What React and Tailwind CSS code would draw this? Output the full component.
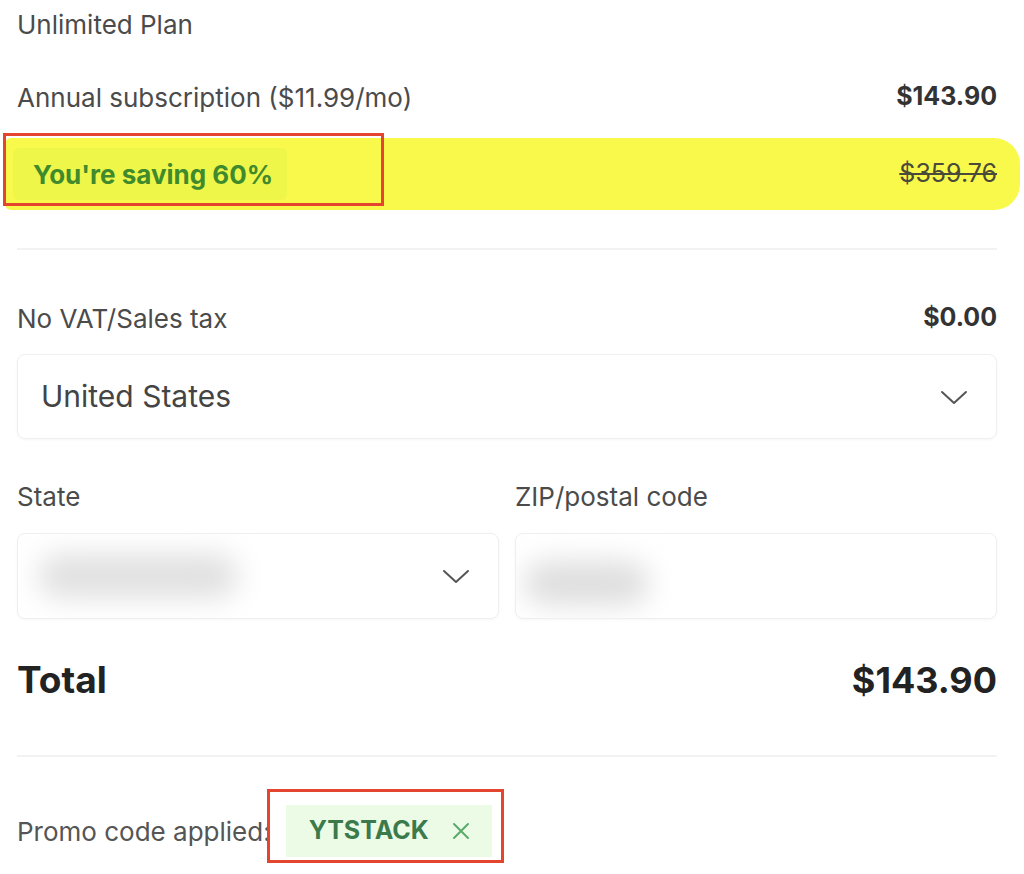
import { useState } from "react";

function Chevron({ className }) {
  return (
    <svg className={className} width="28" height="16" viewBox="0 0 28 16" fill="none">
      <polyline points="2,3 14,14 26,3" stroke="#555" strokeWidth="2" strokeLinecap="round" strokeLinejoin="round" />
    </svg>
  );
}

function Row({ label, value, className }) {
  return (
    <div className={`flex h-[48px] items-center justify-between ${className || ""}`}>
      <span className="text-[26px] text-[#4b4b4b]">{label}</span>
      <span className="text-[25px] font-bold text-[#333]">{value}</span>
    </div>
  );
}

export default function App() {
  const [promo, setPromo] = useState("YTSTACK");

  return (
    <div className="min-h-[874px] bg-white" style={{ fontFamily: "Inter, 'Liberation Sans', sans-serif" }}>
      <div className="pl-[17px] pr-[27px]">
        <div className="flex h-[48px] items-center text-[26px] text-[#4b4b4b]">Unlimited Plan</div>

        <Row className="mt-[25px]" label="Annual subscription ($11.99/mo)" value="$143.90" />

        <div className="relative -ml-[12px] -mr-[23px] mt-[17px] flex h-[72px] items-center justify-between rounded-r-[26px] rounded-l-[6px] bg-[#f9f94c] pr-[23px]">
          <div className="relative ml-[8px] flex h-[52px] items-center rounded-[6px] bg-[#eef64a] pl-[20px] pr-[14px]">
            <span className="text-[26px] font-bold text-[#3f8a2c]">You're saving 60%</span>
            <div className="absolute -left-[10px] -top-[15px] h-[73px] w-[381px] border-[3px] border-[#e4452f]" />
          </div>
          <span className="text-[25px] text-[#4a4a3a] line-through decoration-[2px]">$359.76</span>
        </div>

        <div className="mt-[38px] border-t-2 border-[#f2f2f2]" />

        <Row className="mt-[44px]" label="No VAT/Sales tax" value="$0.00" />

        <button className="mt-[12px] flex h-[85px] w-full items-center justify-between rounded-[8px] border border-[#efefef] pl-[23px] pr-[28px] shadow-[0_1px_3px_rgba(0,0,0,0.04)]">
          <span className="text-[30px] text-[#444]">United States</span>
          <Chevron />
        </button>

        <div className="mt-[34px] grid grid-cols-2 gap-[16px]">
          <div>
            <div className="flex h-[46px] items-center text-[26px] text-[#4b4b4b]">State</div>
            <div className="mt-[14px] flex h-[86px] items-center justify-between overflow-hidden rounded-[8px] border border-[#efefef] pl-[20px] pr-[28px] shadow-[0_1px_3px_rgba(0,0,0,0.04)]">
              <div className="h-[44px] w-[200px] rounded-full bg-[#e0e0e0] blur-[14px]" />
              <Chevron />
            </div>
          </div>
          <div>
            <div className="flex h-[46px] items-center text-[26px] text-[#4b4b4b]">ZIP/postal code</div>
            <div className="mt-[14px] flex h-[86px] items-center overflow-hidden rounded-[8px] border border-[#efefef] pl-[8px] shadow-[0_1px_3px_rgba(0,0,0,0.04)]">
              <div className="mt-[14px] h-[44px] w-[125px] rounded-full bg-[#dedede] blur-[14px]" />
            </div>
          </div>
        </div>

        <div className="mt-[36px] flex h-[50px] items-center justify-between text-[#222]">
          <span className="text-[37px] font-bold">Total</span>
          <span className="text-[36px] font-bold">$143.90</span>
        </div>

        <div className="mt-[50px] border-t-2 border-[#f2f2f2]" />

        <div className="mt-[48px] flex items-center">
          <span className="text-[26px] text-[#555]">Promo code applied:</span>
          {promo && (
            <div className="relative ml-[15px] flex h-[52px] items-center gap-[23px] bg-[#ebfbe6] pl-[23px] pr-[22px]">
              <span className="text-[25px] font-bold text-[#3c7a4b]">{promo}</span>
              <button onClick={() => setPromo("")} className="flex items-center">
                <svg width="18" height="18" viewBox="0 0 18 18" fill="none">
                  <path d="M2 2L16 16M16 2L2 16" stroke="#5aaa6c" strokeWidth="2" strokeLinecap="round" />
                </svg>
              </button>
              <div className="absolute -left-[19px] -top-[16px] h-[74px] w-[237px] border-[3px] border-[#e4452f]" />
            </div>
          )}
        </div>
      </div>
    </div>
  );
}
